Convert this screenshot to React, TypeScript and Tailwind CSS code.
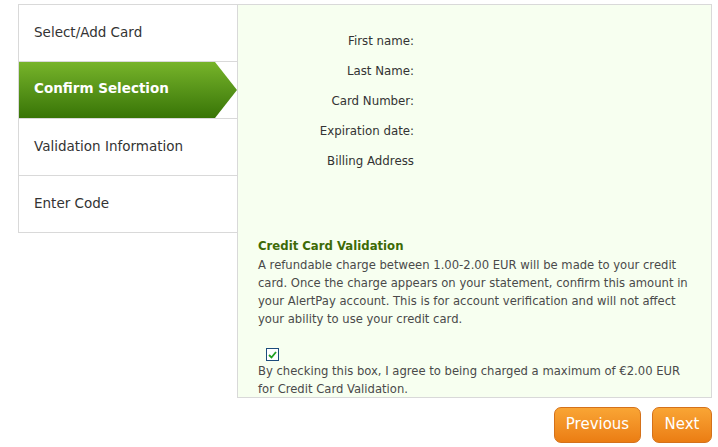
import { useState } from 'react';

const steps = ['Select/Add Card', 'Confirm Selection', 'Validation Information', 'Enter Code'];

const fields = ['First name:', 'Last Name:', 'Card Number:', 'Expiration date:', 'Billing Address'];

export default function App() {
  const [agreed, setAgreed] = useState(true);

  return (
    <div className="w-[718px] h-[447px] bg-white pl-[18px] pt-[4px] font-['DejaVu_Sans',sans-serif] text-[#333]">
      <div className="flex items-start">
        {/* steps */}
        <div className="w-[219px] border-t border-l border-[#d9d9d9]">
          {steps.map((s, i) =>
            i === 1 ? (
              <div key={s} className="relative h-[57px] border-b border-[#d9d9d9]">
                <div className="absolute left-0 top-0 w-[218px] h-[56px] bg-gradient-to-b from-[#77b42a] to-[#387506] [clip-path:polygon(0_0,196px_0,218px_50%,196px_100%,0_100%)]" />
                <div className="relative flex h-full items-center pl-[15px] pb-[3px] text-[13.5px] font-bold text-white">{s}</div>
              </div>
            ) : (
              <div key={s} className="flex h-[57px] items-center border-b border-[#d9d9d9] pl-[15px] pb-[2px] text-[13.5px]">
                {s}
              </div>
            )
          )}
        </div>

        {/* details */}
        <div className="w-[475px] h-[394px] border border-[#d9d9d9] bg-[#f7fff0] text-[11.6px]">
          <div className="pt-[22px]">
            {fields.map((f) => (
              <div key={f} className="flex h-[30px] items-center text-[11.8px]">
                <div className="w-[176px] text-right">{f}</div>
              </div>
            ))}
          </div>

          <div className="mt-[60px] pl-[20px] pr-[20px] text-[#4a4a4a]">
            <h3 className="text-[11.7px] font-bold leading-[18px] text-[#3d6a06]">Credit Card Validation</h3>
            <p className="mt-[1px] leading-[18px]">
              A refundable charge between 1.00-2.00 EUR will be made to your credit card. Once the charge appears on your statement, confirm this amount in your AlertPay account. This is for account verification and will not affect your ability to use your credit card.
            </p>
            <div className="mt-[20px] pl-[8px]">
              <button
                onClick={() => setAgreed(!agreed)}
                className="flex h-[13px] w-[13px] items-center justify-center border border-[#1c4c7c] bg-white"
              >
                {agreed && (
                  <svg width="9" height="8" viewBox="0 0 9 8">
                    <path d="M1 4 L3.5 6.5 L8 1" fill="none" stroke="#21a121" strokeWidth="1.8" />
                  </svg>
                )}
              </button>
            </div>
            <p className="mt-[1px] leading-[18px]">
              By checking this box, I agree to being charged a maximum of €2.00 EUR for Credit Card Validation.
            </p>
          </div>
        </div>
      </div>

      <div className="mt-[9px] flex w-[694px] justify-end gap-[11px]">
        <button className="h-[36px] w-[87px] rounded-[7px] border border-[#d4711a] bg-gradient-to-b from-[#f9a534] to-[#eb7d12] pb-[1px] text-[15px] text-white">
          Previous
        </button>
        <button className="h-[36px] w-[60px] rounded-[7px] border border-[#d4711a] bg-gradient-to-b from-[#f9a534] to-[#eb7d12] pb-[1px] text-[15px] text-white">
          Next
        </button>
      </div>
    </div>
  );
}
